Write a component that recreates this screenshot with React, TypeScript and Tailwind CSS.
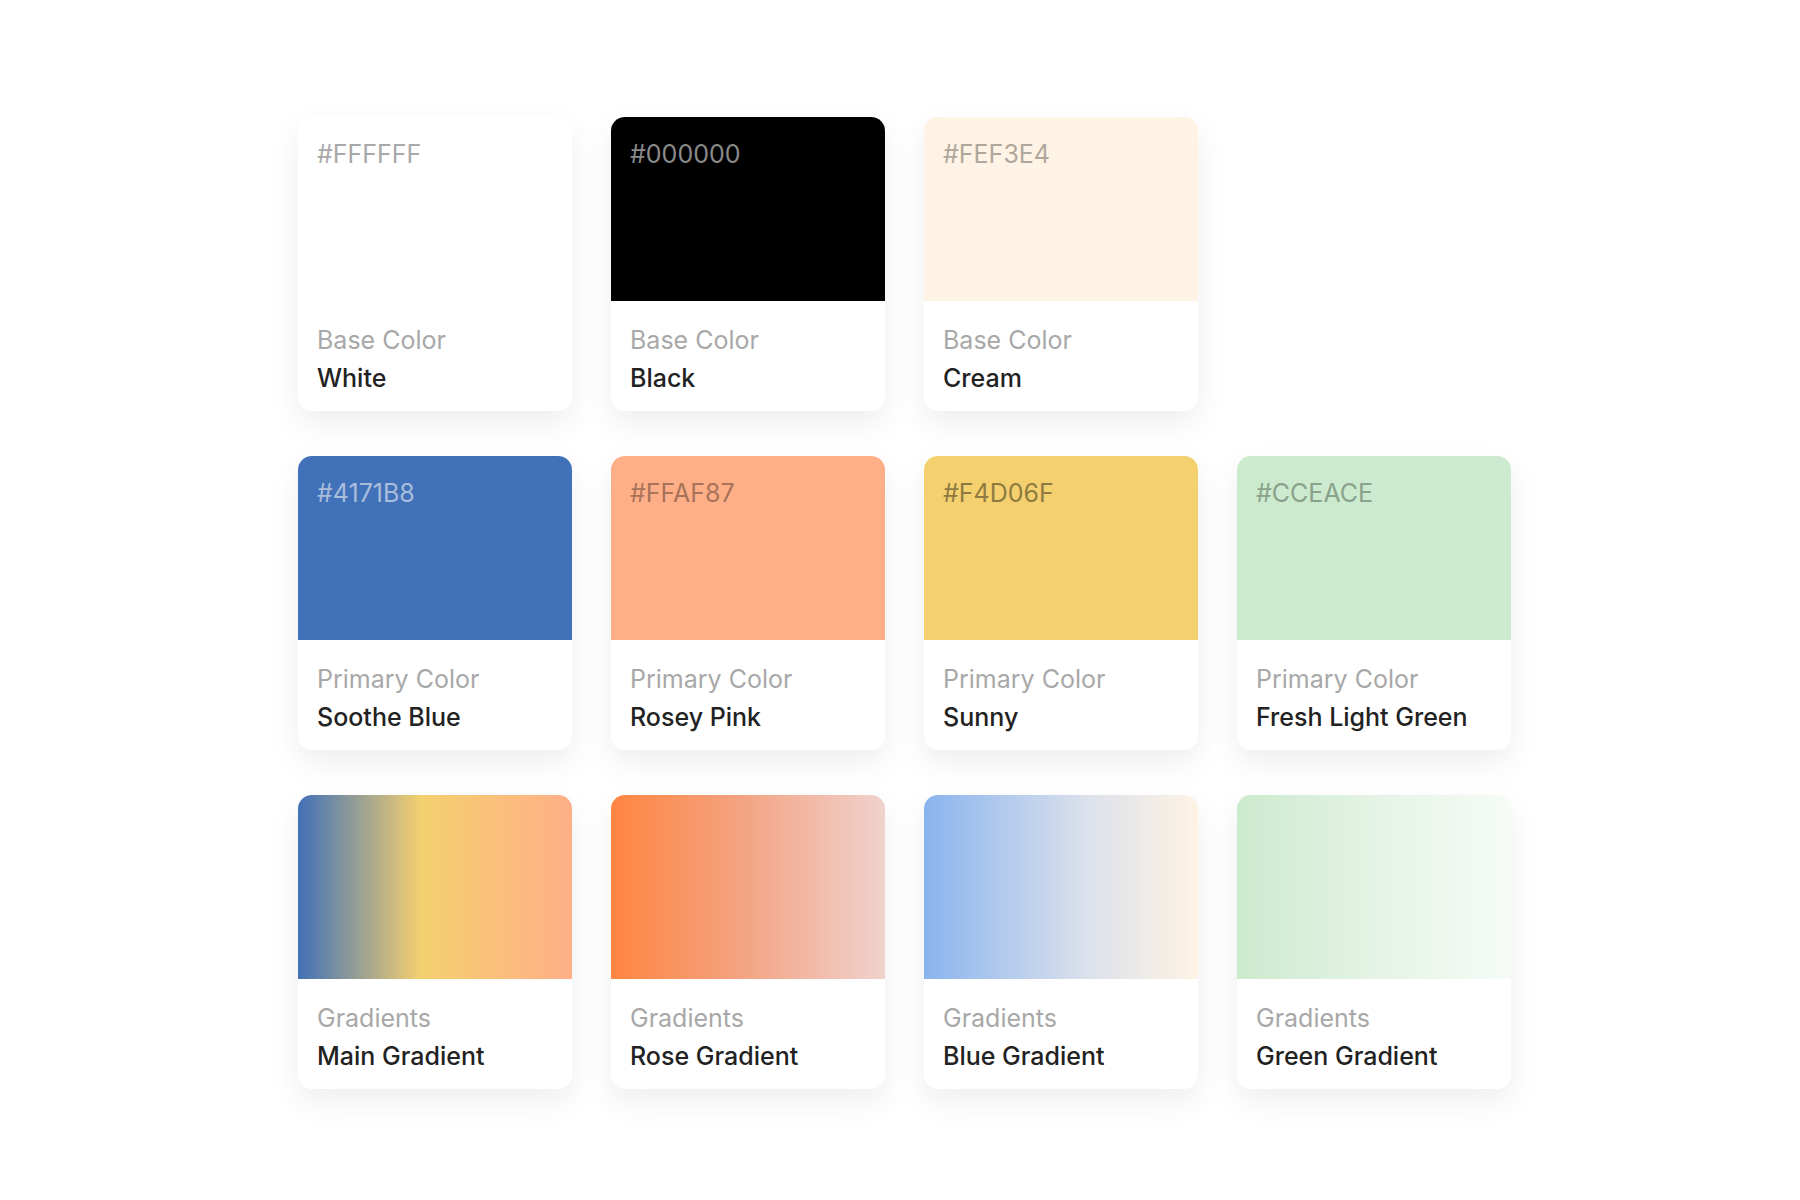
import React from "react";

type C = { hex?: string; bg: string; hexCls: string; label: string; name: string };

const rows: (C | null)[][] = [
  [
    { hex: "#FFFFFF", bg: "bg-white", hexCls: "text-[#a8a8a8]", label: "Base Color", name: "White" },
    { hex: "#000000", bg: "bg-black", hexCls: "text-[#8a8a8a]", label: "Base Color", name: "Black" },
    { hex: "#FEF3E4", bg: "bg-[#FEF3E4]", hexCls: "text-[#b0a79c]", label: "Base Color", name: "Cream" },
    null,
  ],
  [
    { hex: "#4171B8", bg: "bg-[#4171B8]", hexCls: "text-[#a9bddc]", label: "Primary Color", name: "Soothe Blue" },
    { hex: "#FFAF87", bg: "bg-[#FFAF87]", hexCls: "text-[#a8735a]", label: "Primary Color", name: "Rosey Pink" },
    { hex: "#F4D06F", bg: "bg-[#F4D06F]", hexCls: "text-[#8f7a42]", label: "Primary Color", name: "Sunny" },
    { hex: "#CCEACE", bg: "bg-[#CCEACE]", hexCls: "text-[#8aa18c]", label: "Primary Color", name: "Fresh Light Green" },
  ],
  [
    { bg: "bg-[linear-gradient(90deg,#4171B8_0%,#F4D06F_45%,#FFAF87_100%)]", hexCls: "", label: "Gradients", name: "Main Gradient" },
    { bg: "bg-[linear-gradient(90deg,#FF8540_0%,#F3A585_50%,#F0D2CE_100%)]", hexCls: "", label: "Gradients", name: "Rose Gradient" },
    { bg: "bg-[linear-gradient(90deg,#8AB4EE_0%,#DCE1EB_60%,#FEF3E4_100%)]", hexCls: "", label: "Gradients", name: "Blue Gradient" },
    { bg: "bg-[linear-gradient(90deg,#CCEACE_0%,#E6F4E7_55%,#F6FBF6_100%)]", hexCls: "", label: "Gradients", name: "Green Gradient" },
  ],
];

function Card({ c }: { c: C }) {
  return (
    <div className="w-[274px] h-[294px] rounded-[14px] bg-white overflow-hidden shadow-[0_12px_30px_rgba(0,0,0,0.07)] flex flex-col">
      <div className={`h-[184px] ${c.bg} px-[19px] pt-[22px]`}>
        {c.hex && <div className={`text-[25px] leading-[30px] ${c.hexCls}`}>{c.hex}</div>}
      </div>
      <div className="px-[19px] pt-[20px]">
        <div className="text-[25px] leading-[38px] text-[#a8a8a8]">{c.label}</div>
        <div className="text-[25px] leading-[38px] text-[#222] font-medium">{c.name}</div>
      </div>
    </div>
  );
}

export default function App() {
  return (
    <div className="w-[1800px] h-[1200px] bg-white pl-[298px] pt-[117px]" style={{ fontFamily: "Inter, sans-serif" }}>
      <div className="flex flex-col gap-[45px]">
        {rows.map((r, i) => (
          <div key={i} className="flex gap-[39px]">
            {r.map((c, j) => (c ? <Card key={j} c={c} /> : <div key={j} className="w-[274px]" />))}
          </div>
        ))}
      </div>
    </div>
  );
}
